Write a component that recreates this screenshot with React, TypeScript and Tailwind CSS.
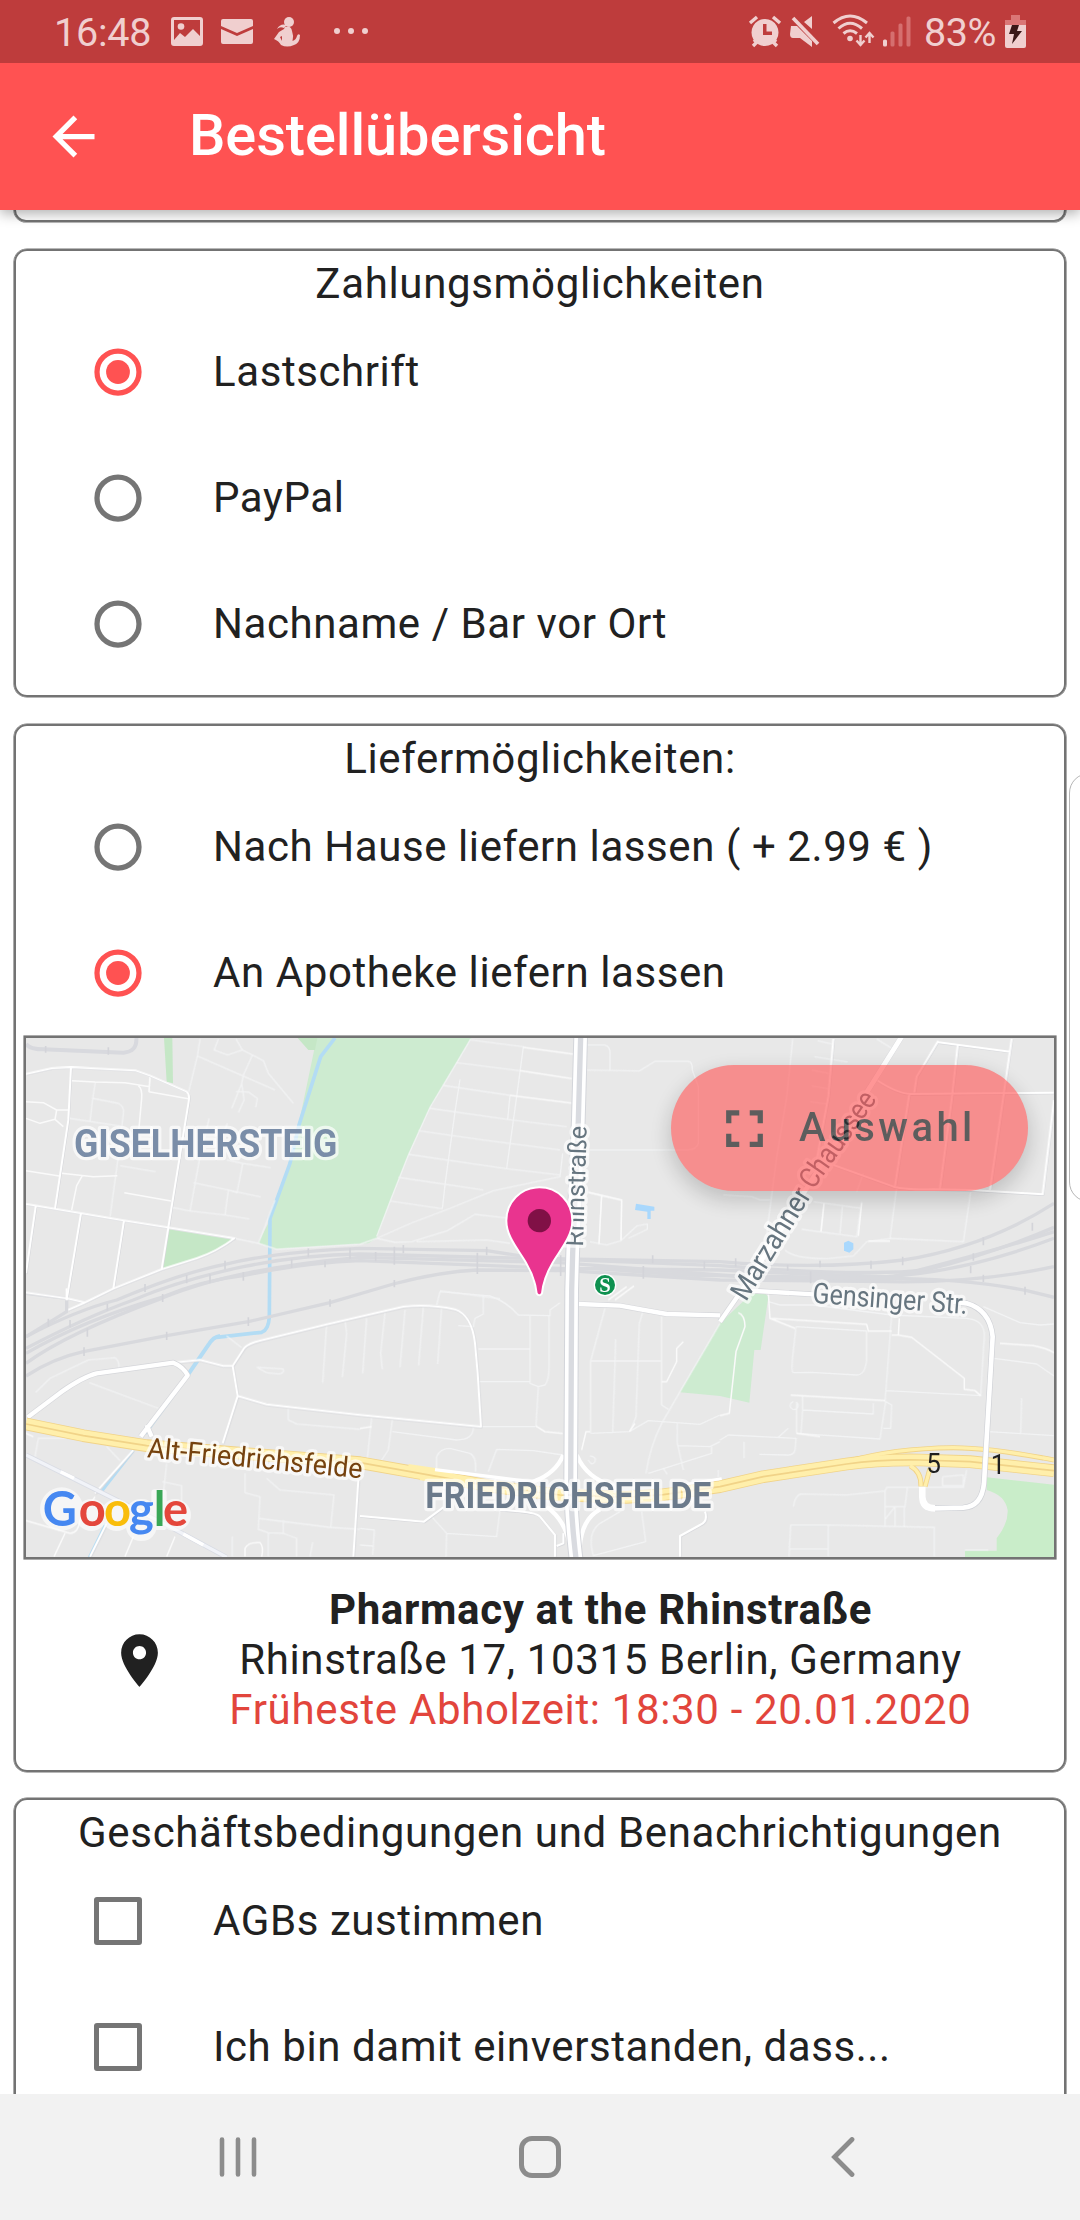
import React from "react";

type Tile = "nw" | "n" | "ne" | "sw" | "s" | "se";
type Line = [Tile, string];

// The map is plotted in six sections; each has its own origin on the sheet.
const ORIGIN: Record<Tile, string> = {
  nw: "translate(0 0)",
  n: "translate(1080 0)",
  ne: "translate(2160 0)",
  sw: "translate(0 810)",
  s: "translate(1080 810)",
  se: "translate(2160 810)",
};

function Lines({ data, color, width, opacity = 1 }: { data: Line[]; color: string; width: number; opacity?: number }) {
  return (
    <g fill="none" stroke={color} strokeWidth={width} strokeLinejoin="round" opacity={opacity}>
      {data.map(([t, d], i) => (
        <path key={i} d={d} transform={ORIGIN[t]} />
      ))}
    </g>
  );
}

const rails: Line[] = [
  ["nw", "M78 950 Q230 870 350 840 Q540 760 675 733 Q830 695 1080 685 L1460 692 L1610 715 L2160 725 Q2460 750 2710 720 Q2960 680 3162 550"],
  ["nw", "M78 985 Q260 890 400 840 Q540 780 730 740 Q900 705 1080 702 L1680 718 L2160 737 Q2600 770 2780 750 Q2980 700 3162 622"],
  ["nw", "M78 1000 Q250 900 485 832 Q610 780 730 767 Q900 730 1080 722 L1680 745 L2160 750 Q2460 765 2660 770 Q2900 755 3162 655"],
  ["nw", "M78 1030 Q200 940 485 835 Q700 745 1080 712 L1680 728 L2160 765 Q2460 785 2660 775 Q2960 700 3162 635"],
  ["nw", "M78 1068 Q160 1015 250 995 L500 947 L745 905 L990 848 L1180 792 Q1320 755 1430 750 L1700 752 L1960 768 L2160 780 L2660 785 Q2930 790 3162 740"],
  ["nw", "M1780 745 L2050 765 L2660 775 Q2900 775 3080 812 L3162 832"],
  ["sw", "M78 140 L200 65 L200 25 L78 10"],
];

const railTicks: Line[] = [
  ["nw", "M137 78V98M325 82V104M435 792V816M675 722V748M925 684V712M560 765V790M630 762V788M730 756V782M875 718V744M975 722V742M1050 684V716"],
  ["sw", "M145 86V110M252 172V198M500 125V150M745 82V108M990 28V50M210 90V112M262 115V140M322 42V62M488 12V36"],
  ["n", "M47 696V724M103 680V734M103 780V802M130 675V700M380 680V706M352 698V762M602 706V768M850 738V776M878 706V730M1033 724V748"],
  ["ne", "M47 715V740M203 734V752M453 722V746M548 710V736M300 722V742M272 754V790M752 738V760M790 764V786M790 652V676M937 608V632M760 700V722M915 800V824"],
];

const faint: Line[] = [
  ["nw", "M600 57L592 108L566 215M592 108L825 210M655 57L642 90L683 105L727 90L708 57M727 90L757 105L730 165L725 190L695 265M757 105L790 122L805 160L880 250M708 215L745 216L772 235L767 262M725 190L732 240L715 278"],
  ["nw", "M627 295L598 420L570 573M682 310L670 340M580 488L685 510L782 531M728 430L812 443M728 430L711 518L685 510L675 585M515 562L570 573L675 585L748 597M825 540L775 670L830 688L1080 673L1130 655M703 655L775 670M680 420L728 430"],
  ["nw", "M208 295L360 318M286 186L278 235L355 250Q372 258 370 280L356 400L330 590M278 235L270 303M450 170L447 215M360 437L467 455"],
  ["n", "M332 57L290 128L210 262L145 405L90 545L50 650M332 60L490 80L470 230L440 445M290 128L480 152M248 196L450 226M210 265L455 300L620 320M175 332L370 360L600 390M145 403L440 446L600 465M115 472L370 510M90 543L247 566M300 178L285 275L255 495L247 566M450 226L443 298M50 655L152 610L270 565L400 512L600 470L608 400"],
  ["n", "M680 75H735Q752 80 750 105V152M675 150L838 153L885 124H985Q998 125 997 150L1015 200V370Q1010 390 980 390H690M685 517L785 540L783 660M725 525L717 672M690 665L740 675L783 662L830 618L862 612V628L805 655M50 655L105 667L155 665L262 632L345 583L440 594M170 665L380 660L450 670M240 812L370 830L420 836"],
  ["ne", "M218 57L200 230L170 410L140 640M293 62L335 72M283 110L383 126M275 150L325 160M275 198L325 206M270 245L320 252M470 57L515 85M430 460L410 515M530 500L510 655L730 665L752 515M195 690Q220 715 320 716L400 708L440 665L515 655M245 628L410 650L425 545M280 545L425 565M312 550L303 635M367 560L360 640M10 525L95 530L120 540H150"],
  ["sw", "M107 307L150 265L265 210L345 203Q360 215 356 235M268 278L475 355M980 100L968 278M1035 90L1040 130L1027 262M865 355V390L890 402L1080 418M680 138L725 173M770 232L850 237Q855 250 835 252L800 248L770 232M105 500L115 445L200 445M320 470L360 512M500 520L487 640M487 575L545 587V640M735 550V608L780 620L775 718L805 728M775 685L990 712L1080 718M800 565L840 600L1002 615L992 712M850 690V730L890 745V800M805 728V800M697 740V800M938 757L930 800M850 730L805 728"],
  ["s", "M240 5L390 18Q440 35 475 75L570 77V60L600 38M240 5L230 45M370 18V72L345 85L340 110L295 107M20 85L8 250M75 68L62 190L67 238M135 60L120 232M190 50L176 226M245 50L233 222M355 177H510M355 275H510M510 75V280L535 290L555 285Q567 270 567 230V75M535 290L528 408M365 410H528M35 382L22 505M97 390L85 480L65 510M97 425L290 450Q340 450 340 412M230 540V500Q240 475 270 475L330 490Q350 500 347 545M385 545L410 478L520 482L608 495"],
  ["s", "M735 55L692 213V430M767 148L765 215L758 430M850 60L838 100L828 380L810 425M692 213L905 213M905 80V345L925 358M1080 100L960 305L905 400Q870 470 858 550M692 430L808 425L865 392L1020 403L1080 375M952 400V460L970 540M952 467L1050 470L1080 455M865 550L1055 490V470M690 498Q710 500 705 515Q695 530 685 510M420 660L410 740L260 730L258 800M215 680L260 730M845 665L857 755L700 797Q680 730 720 700L780 665M0 715L43 720L38 795M0 765L38 768M910 535L922 553M1075 540V560"],
  ["se", "M145 35L180 45L280 45L515 75L740 85Q795 90 793 140L782 315M228 110L440 123V210Q435 255 410 255L275 247L220 248Q213 245 218 200L228 110M515 75L495 335M497 302L785 317M0 450L25 435L228 445L225 480Q220 497 200 495L118 493M72 455V505M205 415L175 442M230 340V430L480 447L497 335L515 345L512 415H490M248 318V360L460 372V340M220 335A12 12 0 1 0 228 336M248 360L243 430M805 425L1002 437M905 325L902 430M822 205L950 222L1002 258M790 50L900 98L960 105L1002 102"],
  ["se", "M220 650Q225 620 240 612L380 615L495 603L500 592H730L740 540M495 603V712M495 650H555L562 592M525 650L495 688M525 650V712M553 650V712M668 560L730 555V587H668V560M207 800L212 705H325L643 712V800M325 705V800M207 777H325M735 780H805"],
];

const minor: Line[] = [
  ["nw", "M215 182L285 186L375 188L450 200M415 197Q427 205 425 235L410 400M450 170L447 215L565 236M78 245L130 248L170 270H205M170 270L165 298L120 310L78 295M165 298L190 320M78 452L178 468M185 460L280 470L352 467M247 467L230 497L215 570M373 518L513 543"],
  ["n", "M490 82L640 102M480 152L635 176M450 226L635 249M685 517L785 540L783 660M725 525L717 672M745 840L800 800M765 840L822 798"],
  ["ne", "M445 663H510M312 550L303 635M415 648L425 550"],
  ["sw", "M78 692L210 730Q235 730 240 690L285 620M195 730L162 800M400 740L375 800M525 740L500 800M735 800V775Q745 755 780 758Q792 770 785 800M78 430L100 440"],
  ["s", "M905 275H920L950 215V175L970 155M528 408L555 425L608 430M665 480L678 425H690M808 425L825 400M0 415L35 410"],
  ["se", "M145 10L150 85L225 115M150 85L440 103L445 123H515M538 85L535 135H515M535 135L575 142L733 265V298L765 302L782 317M212 315L495 332M230 430L300 440M840 160L940 167Q980 175 1002 188M55 68Q75 75 75 110L48 185L28 370L0 377"],
];

const streets: Line[] = [
  ["nw", "M78 162L155 145L213 142L408 152L450 167L560 215Q570 222 566 245L515 560L485 748M213 142L205 300L165 567M78 552L243 580L372 602L505 623L703 655Q650 695 590 715L485 748L340 806L250 850L205 870M107 560L78 760M243 580L200 840M372 602L340 806"],
  ["nw", "M78 818L200 835L255 848M200 840V805"],
  ["ne", "M340 57L325 230L290 420M655 62L590 170L583 218M655 67L870 95M875 57L853 210L810 510M713 77L695 240L660 505M470 180Q530 220 570 222L1002 218M568 222L525 500M340 435L520 500Q560 510 640 508L750 510L968 523L1002 240"],
  ["sw", "M520 218L600 210L670 228H698L732 175Q745 160 780 152L980 103L1080 80L1210 50Q1290 42 1365 58Q1415 75 1425 160L1433 250L1443 410L1080 375L800 343L713 318L698 228M713 318L668 460M560 258L440 420M400 480L285 610M1075 570L1060 800M320 700L270 800"],
  ["s", "M0 678L192 695L250 652M420 660Q530 665 540 680L585 735V800M1035 665Q1045 695 1020 705L960 738V800M610 730V760L590 768"],
];

function Label({ x, y, rotate = 0, size, length, color, weight = 400, children }: {
  x: number; y: number; rotate?: number; size: number; length: number; color: string; weight?: number; children: string;
}) {
  return (
    <text
      transform={`translate(${x} ${y}) rotate(${rotate})`}
      fontSize={size}
      fontWeight={weight}
      textLength={length}
      lengthAdjust="spacingAndGlyphs"
      fill={color}
      stroke="#ffffff"
      strokeOpacity={0.65}
      strokeWidth={20}
      strokeLinejoin="round"
      paintOrder="stroke"
    >
      {children}
    </text>
  );
}

function CityMap() {
  const trunk =
    "M78 1212L250 1247L440 1277L700 1298L1080 1328L1260 1360L1480 1400L1680 1425L1880 1432L1990 1424L2160 1400L2290 1370L2540 1332Q2640 1318 2760 1320L2910 1325L3162 1352";
  const trunkUpper = "M2540 1325Q2680 1285 2860 1283Q2970 1283 3162 1320";
  const slip = "M2730 1337Q2765 1355 2763 1400M2790 1345L2775 1400";
  const rhin = "M1742 50L1735 300L1718 700L1715 810L1712 1400Q1714 1500 1728 1615";
  return (
    <svg className="block h-full w-full" viewBox="78 54 3084 1557" preserveAspectRatio="none" fontFamily="Roboto, sans-serif" letterSpacing="0">
      <rect x="78" y="54" width="3084" height="1557" fill="#e8e8e8" />
      <path d="M950 54L905 270L868 440L815 590L775 668L820 688L1020 675L1105 670L1130 655L1170 545L1225 405L1290 262L1370 128L1414 54Z" fill="#cdebd0" />
      <path d="M492 54H517L519 190L500 185ZM893 54H952L945 90H925ZM507 626L703 655Q650 700 590 715L485 748Z" fill="#c5e7c6" />
      <path d="M2260 815L2290 815L2305 830L2282 990H2263L2248 1148L2160 1128L2040 1117L2160 910Z" fill="#cdebd0" />
      <path d="M2960 1372L3162 1394V1611H2895V1592H2990V1555Q3025 1510 3023 1470Q3015 1425 2960 1410Z" fill="#c9edc9" />
      <g fill="none" stroke="#b3dcf4">
        <path d="M1005 54L962 110L897 315L870 430L810 595L808 890Q806 930 785 937L650 952" strokeWidth="11" />
        <path d="M660 948Q640 950 625 975L560 1070L435 1240" strokeWidth="12" />
        <path d="M400 1292L302 1418M318 1510L268 1612" strokeWidth="9" />
      </g>
      <path d="M1908 551L1963 560V572H1952V597H1942V575L1905 570Z" fill="#a9d8fd" />
      <path d="M2532 668L2545 662L2560 670V688L2548 698L2532 692Z" fill="#a9d8fd" />

      <path d="M78 72Q90 88 130 88L370 98Q412 95 409 54" fill="none" stroke="#d8d9de" strokeWidth="12" />
      <Lines data={rails} color="#d8d9dd" width={10} />
      <Lines data={railTicks} color="#d3d4d9" width={5} />
      <Lines data={faint} color="#f4f5f6" width={4} opacity={0.85} />
      <Lines data={minor} color="#fafafa" width={4.5} />
      <g transform="translate(1.5 2)"><Lines data={streets} color="#d5d6da" width={6} /></g>
      <Lines data={streets} color="#ffffff" width={6} />

      <g fill="none" strokeLinejoin="round">
        <path d="M78 1305L300 1415L500 1515L680 1612" stroke="#d9dce4" strokeWidth="15" />
        <path d="M78 1305L300 1415L500 1515L680 1612" stroke="#f1f3f8" strokeWidth="10" />
        <path d="M182 1355L222 1375M550 1542L610 1575" stroke="#fff" strokeWidth="10" />
        <path d="M83 1192L185 1115Q250 1070 290 1060L520 1028Q550 1040 563 1066L445 1220L422 1250M440 1215L455 1250" stroke="#d5d6da" strokeWidth="17" />
        <path d="M83 1192L185 1115Q250 1070 290 1060L520 1028Q550 1040 563 1066L445 1220L422 1250M440 1215L455 1250" stroke="#fff" strokeWidth="13" />
        <path d="M1735 852L1860 857L2000 882L2160 886M2160 905L2240 790L2705 50M2250 812L2440 823" stroke="#d5d6da" strokeWidth="17" />
        <path d="M1735 852L1860 857L2000 882L2160 886M2160 905L2240 790M2250 812L2440 823" stroke="#fff" strokeWidth="13" />
        <path d="M2235 800L2705 50" stroke="#fff" strokeWidth="15" />
      </g>

      <g fill="none" strokeLinejoin="round">
        <path d={trunk} stroke="#f1d388" strokeWidth="38" />
        <path d={slip} stroke="#f1d388" strokeWidth="15" />
        <path d={trunkUpper} stroke="#f1d388" strokeWidth="15" />
        <path d={trunk} stroke="#ffefab" strokeWidth="33" />
        <path d={slip} stroke="#ffefab" strokeWidth="10" />
        <path d={trunkUpper} stroke="#ffefab" strokeWidth="10" />
        <path d={trunk} stroke="#f1d388" strokeWidth="5" />
        <path d="M1225 1338L1320 1352L1400 1385L1260 1375" stroke="#ffefab" strokeWidth="12" />
        <path d="M1305 1349L1590 1385" stroke="#fff" strokeWidth="10" />
        <path d="M2060 1392L2165 1376" stroke="#fff" strokeWidth="8" />
        <path d="M2860 845L2900 850Q2970 870 2978 950L2952 1390Q2945 1460 2890 1463L2800 1465Q2767 1465 2767 1430V1400" stroke="#cfd1d6" strokeWidth="18" />
        <path d="M2860 845L2900 850Q2970 870 2978 950L2952 1390Q2945 1460 2890 1463L2800 1465" stroke="#fff" strokeWidth="14" />
        <path d="M2805 1465Q2767 1465 2767 1430V1400" stroke="#fff" strokeWidth="20" />
        <path d="M1690 1305Q1665 1365 1590 1388M1730 1305Q1760 1375 1840 1398M1640 1460Q1695 1500 1710 1575L1718 1612M1738 1600Q1740 1500 1800 1468" stroke="#fff" strokeWidth="13" />
        <path d={rhin} stroke="#d3d5da" strokeWidth="44" />
        <path d={rhin} stroke="#fff" strokeWidth="38" />
        <path d={rhin} stroke="#d9dbe0" strokeWidth="16" />
      </g>

      <Label x={222} y={410} size={115} length={790} weight={700} color="#7a8da8">GISELHERSTEIG</Label>
      <Label x={1276} y={1465} size={108} length={858} weight={700} color="#6b7a8b">FRIEDRICHSFELDE</Label>
      <Label x={440} y={1312} rotate={5.6} size={84} length={648} color="#75420f">Alt-Friedrichsfelde</Label>
      <Label x={1749} y={680} rotate={-88.2} size={76} length={362} color="#66757f">Rhinstraße</Label>
      <Label x={2238} y={847} rotate={-58.5} size={86} length={378} color="#66757f">Marzahner</Label>
      <Label x={2440} y={511} rotate={-55} size={86} length={334} color="#66757f">Chaussee</Label>
      <Label x={2436} y={848} rotate={4.2} size={86} length={466} color="#66757f">Gensinger Str.</Label>
      <text x={2779} y={1360} fontSize="84" textLength="44" lengthAdjust="spacingAndGlyphs" fill="#1f1f1f">5</text>
      <text x={2972} y={1363} fontSize="84" textLength="44" lengthAdjust="spacingAndGlyphs" fill="#1f1f1f">1</text>

      <circle cx="1815" cy="795" r="34" fill="#fff" />
      <circle cx="1815" cy="795" r="30" fill="#0f9150" />
      <text x="1815" y="817" textAnchor="middle" fontSize="62" fontWeight="700" fontFamily="Liberation Serif, serif" fill="#fff">S</text>

      <path d="M1618 502C1562 502 1519 546 1519 602C1519 650 1556 690 1578 728C1600 765 1607 790 1610 820Q1618 832 1626 820C1629 790 1636 765 1658 728C1680 690 1717 650 1717 602C1717 546 1674 502 1618 502Z" fill="#e9348f" stroke="#fff" strokeWidth="6" />
      <circle cx="1618" cy="602" r="35" fill="#801046" />

      <g fill="#fff" opacity="0.6">
        <circle cx="185" cy="1467" r="65" />
        <circle cx="274" cy="1485" r="48" />
        <circle cx="350" cy="1485" r="48" />
        <rect x="378" y="1437" width="92" height="126" rx="44" />
        <rect x="454" y="1408" width="46" height="122" rx="10" />
        <circle cx="525" cy="1485" r="48" />
      </g>
      <text y="1518" x="128 236 312 387 461 489" fontFamily="Lato, sans-serif" fontWeight="700" fontSize="141">
        <tspan fill="#4688f1">G</tspan><tspan fill="#e4473c">o</tspan><tspan fill="#f9bd0b">o</tspan><tspan fill="#4688f1">g</tspan><tspan fill="#3aa757">l</tspan><tspan fill="#e4473c">e</tspan>
      </text>
    </svg>
  );
}

function Radio({ on }: { on?: boolean }) {
  return (
    <svg className="h-12 w-12 shrink-0" viewBox="0 0 48 48">
      <circle cx="24" cy="24" r="21" fill="none" stroke={on ? "#ff5252" : "#757575"} strokeWidth="5.25" />
      {on && <circle cx="24" cy="24" r="11.9" fill="#ff5252" />}
    </svg>
  );
}

function Option({ label, control }: { label: string; control: React.ReactNode }) {
  return (
    <div className="flex h-[126px] items-center gap-[71px] pl-[78px]">
      {control}
      <span className="pb-px leading-[49px] tracking-[0.58px] whitespace-nowrap">{label}</span>
    </div>
  );
}

function Card({ title, className, children }: { title: string; className: string; children: React.ReactNode }) {
  return (
    <section className={`mx-[14px] shrink-0 rounded-[13px] border-2 border-[#737373] shadow-[0_0_0_0.6px_#737373] ${className}`}>
      <h2 className="h-[58px] pt-2 text-center leading-[50px]">{title}</h2>
      {children}
    </section>
  );
}

const checkbox = <span className="h-12 w-12 shrink-0 rounded-[3px] border-[5px] border-[#757575]" />;

function StatusBar() {
  return (
    <div className="relative z-20 flex h-[63px] shrink-0 items-center justify-between bg-[#be3c3c] text-[39.5px] leading-[66px] text-[#f0cfcf]">
      <div className="flex items-center pl-[54px]">
        <span className="h-[63px] w-[97px] tracking-[-0.2px]">16:48</span>
        <svg className="ml-5 h-[63px] w-[200px]" viewBox="171 0 200 63" fill="#f0cfcf">
          <path fillRule="evenodd" d="M174 17H200Q203 17 203 20V43Q203 46 200 46H174Q171 46 171 43V20Q171 17 174 17ZM174 20V40L180 33L185 37L193 29L200 36V20Z" />
          <circle cx="181" cy="26.500" r="3.300" />
          <path d="M223 19H251Q253 19 253 21V26L237 33L221 26V21Q221 19 223 19ZM221 29L237 36L253 29V42Q253 44 251 44H223Q221 44 221 42Z" />
          <circle cx="289" cy="22" r="5" />
          <path d="M285 27Q291 25 292 31Q294 36 292.500 41Q296 40 297 36Q298 33 300 35Q300 43 294 45Q287 48 281 45Q279 41 274 39L279 32L284 29ZM280 37L282 41V36Z" fillRule="evenodd" />
          <path d="M277 29Q280 23 287 25L284 28Q280 26 277 29Z" />
          <circle cx="337" cy="31" r="3" /><circle cx="351" cy="31" r="3" /><circle cx="365" cy="31" r="3" />
        </svg>
      </div>
      <div className="flex items-center pr-[53px]">
        <svg className="h-[63px] w-[164px]" viewBox="748 0 164 63" fill="#f0cfcf">
          <path d="M754 42L758 38M776 42L772 38" stroke="#f0cfcf" strokeWidth="3.500" />
          <path fillRule="evenodd" d="M765 19A13.500 13.500 0 1 0 765.010 19ZM763 24H766.500V31.500H772V35H763Z" />
          <path d="M750 23L757 17M780 23L773 17M753 46L758 41M777 46L772 41" stroke="#f0cfcf" strokeWidth="3.400" />
          <path d="M791 26H797L812 41V47L800 38H793Q790 38 790 34ZM804 22L812 16V29Z" />
          <path d="M793 18L818 44" stroke="#f0cfcf" strokeWidth="3.600" />
          <g fill="none" stroke="#f0cfcf" strokeWidth="3">
            <path d="M833.500 23Q850 9 867 23M838.500 28.500Q850 18 862 28.500M843.500 33.500Q850 28 857 33.500" />
            <path d="M860.500 35V44M856.500 40.500L860.500 45L864.500 40.500M869.500 43V34M865.500 37.500L869.500 33L873.500 37.500" strokeWidth="2.400" />
          </g>
          <circle cx="850" cy="38.500" r="2.800" />
          <rect x="883" y="39.500" width="4" height="7" rx="1.500" />
          <g fill="#d56f6f"><rect x="890.500" y="31.500" width="4" height="15" rx="1.500" /><rect x="898.500" y="23.500" width="4" height="23" rx="1.500" /><rect x="906.500" y="16.500" width="4" height="30" rx="1.500" /></g>
        </svg>
        <span className="ml-3 h-[63px] w-[73px] whitespace-nowrap tracking-[-0.4px]">83%</span>
        <svg className="ml-[7px] h-[63px] w-[23px]" viewBox="1004 0 23 63">
          <path d="M1011 15H1020V20H1026V26H1005V20H1011Z" fill="#da7676" />
          <path d="M1005 25H1026V46Q1026 48 1024 48H1007Q1005 48 1005 46Z" fill="#f0cfcf" />
          <path d="M1012 25H1019L1017 31H1022L1012 44L1014 34H1009Z" fill="#3a1717" />
        </svg>
      </div>
    </div>
  );
}

export default function App() {
  return (
    <div className="relative flex h-[2220px] w-[1080px] flex-col overflow-hidden bg-white font-[Roboto,sans-serif] text-[42px] tracking-[0.66px] text-[#212121]">
      <StatusBar />
      <header className="relative z-10 flex h-[147px] shrink-0 items-center bg-[#ff5252] pl-[42px] shadow-[0_4px_12px_0px_rgba(0,0,0,0.3)]">
        <svg className="h-[63px] w-[63px]" viewBox="0 0 24 24" fill="#fff">
          <path d="M20 11H7.830l5.590-5.590L12 4l-8 8 8 8 1.410-1.410L7.830 13H20v-2z" />
        </svg>
        <h1 className="ml-[84px] pb-0.5 text-[57.75px] leading-[67px] font-medium tracking-[-0.1px] text-white">Bestellübersicht</h1>
      </header>

      <main className="flex min-h-0 flex-1 flex-col overflow-hidden">
        <div className="mx-[14px] mb-[27px] h-3 shrink-0 rounded-b-[13px] border-2 border-t-0 border-[#737373] shadow-[0_0_0_0.6px_#737373]" />

        <Card title="Zahlungsmöglichkeiten" className="mb-[27px] h-[448px]">
          <Option label="Lastschrift" control={<Radio on />} />
          <Option label="PayPal" control={<Radio />} />
          <Option label="Nachname / Bar vor Ort" control={<Radio />} />
        </Card>

        <Card title="Liefermöglichkeiten:" className="mb-[26px] h-[1048px]">
          <Option label="Nach Hause liefern lassen ( + 2.99 € )" control={<Radio />} />
          <Option label="An Apotheke liefern lassen" control={<Radio on />} />
          <div className="relative mx-2 h-[523px] border-2 border-[#737373] shadow-[0_0_0_0.6px_#737373]">
            <CityMap />
            <button className="absolute top-[27px] right-[26px] flex h-[126px] w-[357px] items-center gap-[23px] rounded-full bg-[#ff5252] pl-[42px] font-medium tracking-[3.4px] text-black opacity-60 shadow-[0_8px_20px_2px_rgba(0,0,0,0.28)]">
              <svg className="h-[63px] w-[63px]" viewBox="0 0 24 24">
                <path d="M7 14H5v5h5v-2H7v-3zm-2-4h2V7h3V5H5v5zm12 7h-3v2h5v-5h-2v3zM14 5v2h3v3h2V5h-5z" />
              </svg>
              <span className="text-[40px]">Auswahl</span>
            </button>
          </div>
          <div className="flex items-center pt-[26px] pl-[92px]">
            <svg className="h-[63px] w-[63px]" viewBox="0 0 24 24" fill="#212121">
              <path d="M12 2C8.130 2 5 5.130 5 9c0 5.250 7 13 7 13s7-7.750 7-13c0-3.870-3.130-7-7-7zm0 9.500c-1.380 0-2.500-1.120-2.500-2.500s1.120-2.500 2.500-2.500 2.500 1.120 2.500 2.500-1.120 2.500-2.500 2.500z" />
            </svg>
            <div className="ml-[41px] w-[777px] text-center leading-[50px] whitespace-nowrap">
              <p className="font-bold">Pharmacy at the Rhinstraße</p>
              <p>Rhinstraße 17, 10315 Berlin, Germany</p>
              <p className="text-[#e2453c]">Früheste Abholzeit: 18:30 - 20.01.2020</p>
            </div>
          </div>
        </Card>

        <Card title="Geschäftsbedingungen und Benachrichtigungen" className="h-[448px]">
          <Option label="AGBs zustimmen" control={checkbox} />
          <Option label="Ich bin damit einverstanden, dass..." control={checkbox} />
        </Card>
      </main>

      <nav className="flex h-[126px] shrink-0 items-center bg-[#f2f2f2] pl-[219px]">
        <svg className="h-10 w-[38px]" viewBox="0 0 38 40" stroke="#8c8c8c" strokeWidth="4.600" strokeLinecap="round">
          <path d="M3 2.500V37.500M19 2.500V37.500M35 2.500V37.500" />
        </svg>
        <span className="ml-[262px] h-[42px] w-[42px] rounded-[13px] border-[5px] border-[#8c8c8c]" />
        <svg className="ml-[270px] h-10 w-6" viewBox="0 0 24 40" fill="none" stroke="#8c8c8c" strokeWidth="4.800" strokeLinecap="round">
          <path d="M21 2.500L3.500 20L21 37.500" />
        </svg>
      </nav>

      {/* Edge panel handle */}
      <div className="absolute top-[773px] left-[1069px] h-[429px] w-10 rounded-[20px] border-[1.500px] border-[#b5b5b5] bg-white" />
    </div>
  );
}
